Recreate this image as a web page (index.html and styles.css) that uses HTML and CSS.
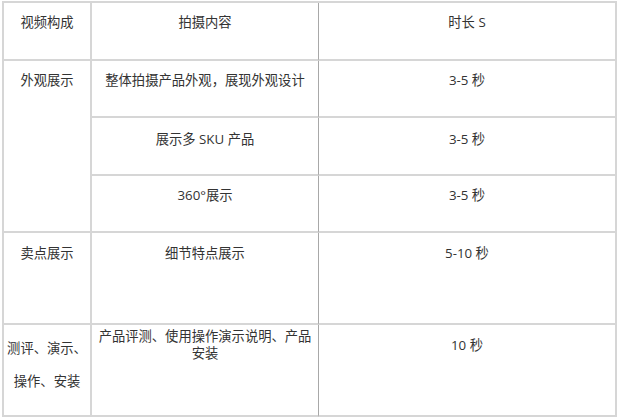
FILE: index.html
```html
<!DOCTYPE html>
<html lang="zh">
<head>
<meta charset="utf-8">
<title>视频构成</title>
<link rel="stylesheet" href="styles.css">
</head>
<body>
<div class="wrap">
<table class="grid">
  <colgroup>
    <col class="c1"><col class="c2"><col class="c3">
  </colgroup>
  <tr class="r-head">
    <td class="a">视频构成</td>
    <td class="b">拍摄内容</td>
    <td class="c">时长 S</td>
  </tr>
  <tr class="r-a">
    <td class="a" rowspan="3">外观展示</td>
    <td class="b">整体拍摄产品外观，展现外观设计</td>
    <td class="c">3-5 秒</td>
  </tr>
  <tr class="r-b">
    <td class="b">展示多 SKU 产品</td>
    <td class="c">3-5 秒</td>
  </tr>
  <tr class="r-c">
    <td class="b">360°展示</td>
    <td class="c">3-5 秒</td>
  </tr>
  <tr class="r-tall">
    <td class="a">卖点展示</td>
    <td class="b">细节特点展示</td>
    <td class="c">5-10 秒</td>
  </tr>
  <tr class="r-tall">
    <td class="a spaced"><div>测评、演示、</div><div>操作、安装</div></td>
    <td class="b tight">产品评测、使用操作演示说明、产品安装</td>
    <td class="c">10 秒</td>
  </tr>
</table>
</div>
</body>
</html>
```

FILE: styles.css
```css
html, body {
  margin: 0;
  padding: 0;
  background: #ffffff;
}

.wrap {
  padding: 1px 0 0 2px;
}

.grid {
  border-collapse: separate;
  border-spacing: 0;
  table-layout: fixed;
  width: 615px;
  border-top: 2px solid #d6d6d6;
  border-left: 2px solid #d6d6d6;
  font-family: "Open Sans", "Noto Sans CJK SC", sans-serif;
  font-size: 13.3px;
  line-height: 18px;
  color: #333333;
}

.c1 { width: 88px; }
.c2 { width: 227px; }
.c3 { width: 298px; }

.grid td {
  box-sizing: border-box;
  vertical-align: top;
  text-align: center;
  padding: 11px 4px 0;
  border-right: 2px solid #d6d6d6;
  border-bottom: 2px solid #d6d6d6;
  white-space: normal;
}

.grid td.b {
  border-right: 1px solid #a8a8a8;
}

.r-head td { height: 58px; padding-top: 10px; }
.r-a td { height: 57px; padding-top: 10px; }
.r-b td { height: 58px; padding-top: 12px; }
.r-c td { height: 57px; padding-top: 10px; }
.r-tall td { height: 92px; }

.grid td.spaced {
  padding: 7px 0 0;
  line-height: 33px;
}

.grid td.tight {
  padding-top: 3px;
  line-height: 17px;
}
```
